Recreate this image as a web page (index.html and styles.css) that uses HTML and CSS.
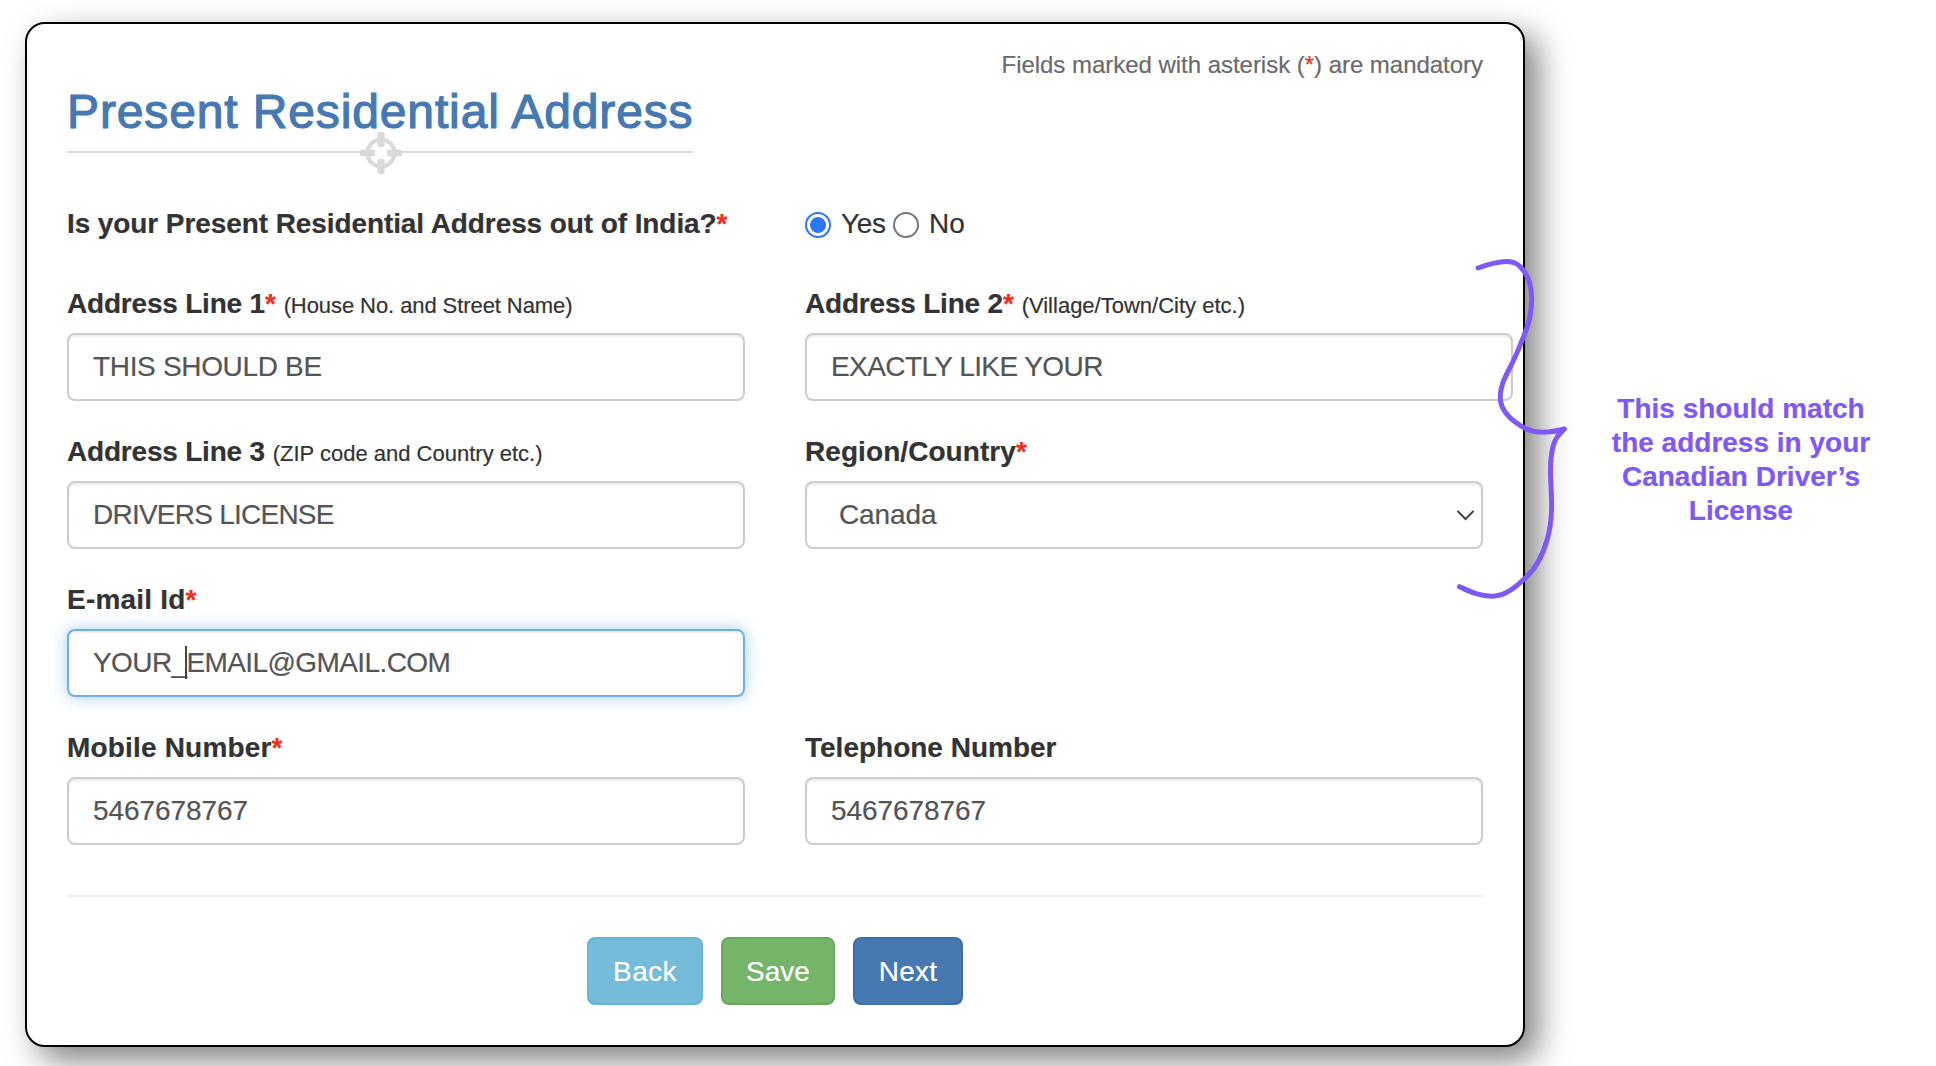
FILE: index.html
```
<!DOCTYPE html>
<html lang="en">
<head>
<meta charset="utf-8">
<title>Present Residential Address</title>
<link rel="stylesheet" href="styles.css">
</head>
<body>
<div class="page">
  <main class="card">
    <p class="note">Fields marked with asterisk (<span class="req">*</span>) are mandatory</p>
    <h1 class="title">Present Residential Address
      <svg class="title-icon" width="44" height="44" viewBox="-22 -22 44 44" aria-hidden="true">
        <circle r="13.5" fill="#fff" stroke="#d9d9d9" stroke-width="4.2"/>
        <g fill="#d9d9d9">
          <rect x="-3.6" y="-21" width="7.2" height="15" rx="2"/>
          <rect x="-3.6" y="6" width="7.2" height="15" rx="2"/>
          <rect x="-21" y="-3.6" width="15" height="7.2" rx="2"/>
          <rect x="6" y="-3.6" width="15" height="7.2" rx="2"/>
        </g>
      </svg>
    </h1>

    <form class="form">
      <div class="row question">
        <div class="label ls-question">Is your Present Residential Address out of India?<span class="req">*</span></div>
        <div class="radios">
          <span class="radio on"></span><label class="yes">Yes</label>
          <span class="radio"></span><label class="no">No</label>
        </div>
      </div>

      <div class="row">
        <div class="field">
          <label class="label"><span class="ls-address">Address Line 1</span><span class="req">*</span> <small class="ls-house">(House No. and Street Name)</small></label>
          <input class="control ls-line1" value="THIS SHOULD BE">
        </div>
        <div class="field">
          <label class="label"><span class="ls-address">Address Line 2</span><span class="req">*</span> <small>(Village/Town/City etc.)</small></label>
          <input class="control wide ls-line2" value="EXACTLY LIKE YOUR">
        </div>
      </div>

      <div class="row">
        <div class="field">
          <label class="label"><span class="ls-address">Address Line 3</span> <small>(ZIP code and Country etc.)</small></label>
          <input class="control ls-line3" value="DRIVERS LICENSE">
        </div>
        <div class="field">
          <label class="label"><span class="ls-region">Region/Country</span><span class="req">*</span></label>
          <div class="control select"><span class="ls-canada">Canada</span>
            <svg width="19" height="13" viewBox="0 0 19 13" fill="none" stroke="#444" stroke-width="2" stroke-linecap="round" aria-hidden="true"><path d="M2 2.5 9.5 10 17 2.5"/></svg>
          </div>
        </div>
      </div>

      <div class="row">
        <div class="field">
          <label class="label"><span class="ls-email-label">E-mail Id</span><span class="req">*</span></label>
          <div class="caret-box">
            <input class="control active ls-email" value="YOUR_EMAIL@GMAIL.COM">
            <span class="caret"></span>
          </div>
        </div>
      </div>

      <div class="row">
        <div class="field">
          <label class="label"><span class="ls-mobile">Mobile Number</span><span class="req">*</span></label>
          <input class="control ls-digits" value="5467678767">
        </div>
        <div class="field">
          <label class="label">Telephone Number</label>
          <input class="control ls-digits" value="5467678767">
        </div>
      </div>

      <hr class="rule">
      <div class="actions">
        <button type="button" class="btn back">Back</button>
        <button type="button" class="btn save">Save</button>
        <button type="button" class="btn next">Next</button>
      </div>
    </form>
  </main>
  <aside class="callout">This should match<br>the address in your<br>Canadian Driver’s<br>License</aside>
</div>
<svg class="brace" width="120" height="350" viewBox="1450 255 120 350" fill="none" stroke="#7f58f6" stroke-width="5" stroke-linecap="round" stroke-linejoin="round" aria-hidden="true">
  <path d="M1478 268C1488 264.500 1498 261.500 1506 261.500C1512 261.500 1516 262.500 1519.500 266C1528 274 1531.600 284 1531.600 298.500C1531.600 310 1530 320 1526 330C1522 341 1518 351 1513 361.500C1507 374 1500.200 384 1500.200 397C1500.200 413 1515 423 1526.500 429C1536 433.500 1549 433 1564.500 429C1559 434.500 1555 438 1553 447C1550.500 456 1550.500 463 1550.500 470C1550.500 484 1552 497 1551.500 510C1551.200 521 1550 530 1547 540C1542 558 1534 571 1523 580C1513 590 1503 596.300 1491.300 596.300C1479 596.300 1469 591 1459.500 586.700"/>
</svg>
</body>
</html>
```
FILE: styles.css
```
* { box-sizing: border-box; }

body {
  margin: 0;
  height: 1066px;
  overflow: hidden;
  position: relative;
  background: #fff;
  color: #333;
  font: 28px/40px "Liberation Sans", Arial, sans-serif;
  -webkit-text-stroke: .2px;
}

.page {
  display: flex;
  align-items: flex-start;
  padding: 22px 0 0 25px;
}

.card {
  width: 1500px;
  height: 1025px;
  flex: none;
  padding: 24px 40px 0;
  border: 2px solid #000;
  border-radius: 20px;
  background: #fff;
  box-shadow: 13px 13px 32px rgba(0, 0, 0, .5);
}

.note {
  margin: 0;
  text-align: right;
  color: #6b6b6b;
  font-size: 24px;
  line-height: 34px;
  letter-spacing: -.03px;
}

.req { color: #ee2f20; }

.title {
  position: relative;
  width: 626px;
  height: 68px;
  margin: 3px 0 50px;
  border-bottom: 2px solid #d9d9d9;
  color: #4679b2;
  font-size: 48px;
  font-weight: 500;
  line-height: 53px;
  letter-spacing: .87px;
  white-space: nowrap;
  -webkit-text-stroke: 1.2px #4679b2;
}

.title-icon {
  position: absolute;
  left: 291.500px;
  bottom: -24px;
}

.form { margin: 0; }

.row {
  display: grid;
  grid-template-columns: 678px 678px;
  column-gap: 60px;
  margin-bottom: 30px;
}

.question { margin-bottom: 40px; }

.label {
  display: block;
  height: 40px;
  padding-top: 1px;
  font-weight: 700;
  white-space: nowrap;
}

.label small {
  font-size: 22px;
  font-weight: 400;
}

.field .label { margin-bottom: 10px; }

.radios {
  display: flex;
  align-items: center;
  height: 42px;
  margin-bottom: -2px;
}

.radio {
  width: 26px;
  height: 26px;
  margin-top: 2px;
  border: 2px solid #767676;
  border-radius: 50%;
}

.radio.on {
  border-color: #2d76f6;
  background: radial-gradient(circle, #2d76f6 7.500px, #fff 8.300px);
}

.yes { width: 52px; margin-left: 10px; letter-spacing: -.4px; }
.no { margin-left: 10px; }

.control {
  display: block;
  width: 100%;
  height: 68px;
  padding: 0 24px;
  border: 2px solid #ccc;
  border-radius: 8px;
  outline: 0;
  background: #fff;
  box-shadow: inset 0 2px 2px rgba(0, 0, 0, .075);
  color: #555;
  font: inherit;
}

.wide { width: 708px; }

.select {
  display: flex;
  align-items: center;
  justify-content: space-between;
  padding: 0 6px 0 32px;
}

.active {
  border-color: #74ade6;
  box-shadow: inset 0 2px 2px rgba(0, 0, 0, .075), 0 0 16px rgba(102, 175, 233, .6);
}

.caret-box { position: relative; }

.caret {
  position: absolute;
  left: 118px;
  top: 17px;
  width: 2px;
  height: 33px;
  background: #444;
}

.rule {
  height: 2px;
  margin: 50px 0 40px;
  border: 0;
  background: #eee;
}

.actions {
  display: flex;
  gap: 18px;
  margin-left: 520px;
}

.btn {
  height: 68px;
  padding: 1px 0 0;
  border: 2px solid;
  border-radius: 8px;
  color: #fff;
  font: inherit;
}

.back { width: 116px; border-color: #65b5d5; background: #74bcda; letter-spacing: .4px; }
.save { width: 114px; border-color: #67a959; background: #74b569; }
.next { width: 110px; border-color: #3d6ea5; background: #4679b2; letter-spacing: .2px; }

.callout {
  width: 270px;
  margin: 370px 0 0 81px;
  color: #7f58f6;
  font-weight: 700;
  line-height: 34px;
  text-align: center;
  white-space: nowrap;
}

/* Hand-drawn bracket laid over the card edge */
.brace {
  position: absolute;
  left: 1450px;
  top: 255px;
}

/* Tracking for individual labels and values */
.ls-question { letter-spacing: -.09px; }
.ls-address { letter-spacing: -.2px; }
.ls-house { letter-spacing: -.08px; }
.ls-region { letter-spacing: .07px; }
.ls-email-label { letter-spacing: .2px; }
.ls-mobile { letter-spacing: .18px; }
.ls-line1 { letter-spacing: -.33px; }
.ls-line2 { letter-spacing: -.58px; }
.ls-line3 { letter-spacing: -.76px; }
.ls-email { letter-spacing: -.6px; }
.ls-digits { letter-spacing: -.08px; }
.ls-canada { letter-spacing: -.1px; }
```
